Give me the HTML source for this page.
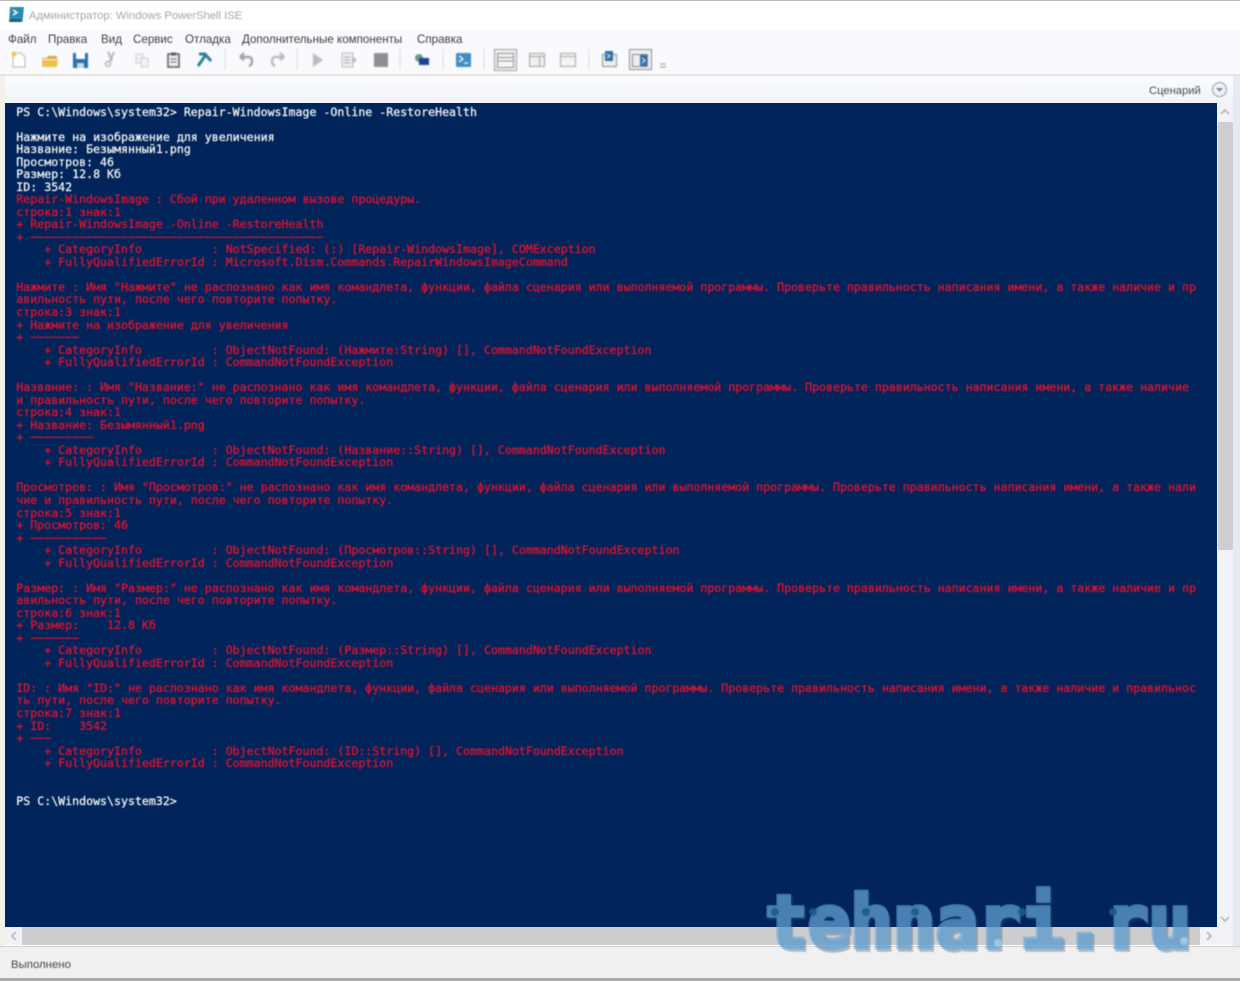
<!DOCTYPE html>
<html lang="ru"><head><meta charset="utf-8"><title>Windows PowerShell ISE</title>
<style>
html,body{margin:0;padding:0}
body{width:1240px;height:981px;overflow:hidden;background:#fff;position:relative;font-family:"Liberation Sans","Noto Sans CJK SC",sans-serif;}
.a{position:absolute}
.ui{color:#3c3f45;font-size:11.6px;filter:blur(.5px);white-space:nowrap}
#console{left:5px;top:103px;width:1212px;height:824px;background:#01255a;overflow:hidden}
pre{position:absolute;left:11.3px;top:2.5px;margin:0;font:11.6px/12.527px "DejaVu Sans Mono","Liberation Mono",monospace;color:#f4f4f4;filter:blur(.6px);white-space:pre;-webkit-text-stroke:.25px currentColor}
pre i{font-style:normal;color:#e8102e}
</style></head><body>
<div class="a" style="left:0;top:0;width:1240px;height:30px;background:#fff"></div>
<div class="a" style="left:0;top:30px;width:1240px;height:45px;background:#f9fafe"></div>
<div class="a" style="left:0;top:74px;width:1240px;height:2px;background:#e6e4dc"></div>
<div class="a" style="left:0;top:76px;width:1240px;height:27px;background:linear-gradient(#fbfcfe,#f0f3f9)"></div>
<div class="a" style="left:0;top:0;width:1240px;height:1px;background:#bbb"></div>

<svg class="a" style="left:8px;top:6px;filter:blur(.5px)" width="17" height="17" viewBox="0 0 17 17"><path d="M2 1H16L14.500 16H1z" fill="#2c8bb0"/><path d="M5 4l4 2.500-4 2.500" fill="none" stroke="#fff" stroke-width="1.400"/><path d="M2 13h11v3H1.500z" fill="#205c78"/></svg>
<div class="a ui" style="left:29px;top:10px;font-size:11.2px;color:#a3a6ab">Администратор: Windows PowerShell ISE</div>

<div class="a ui" style="left:8px;top:33px">Файл</div>
<div class="a ui" style="left:48px;top:33px">Правка</div>
<div class="a ui" style="left:101px;top:33px">Вид</div>
<div class="a ui" style="left:133px;top:33px">Сервис</div>
<div class="a ui" style="left:185px;top:33px">Отладка</div>
<div class="a ui" style="left:242px;top:33px">Дополнительные компоненты</div>
<div class="a ui" style="left:417px;top:33px">Справка</div>

<svg class="a" style="left:0;top:48px;filter:blur(.7px)" width="680" height="26" viewBox="0 0 680 26">
<path d="M13 5h8l4 4v10H13z" fill="#fff" stroke="#b5b2a5"/><circle cx="14" cy="6" r="2.500" fill="#f3c64a"/>
<path d="M42 10h5l1-2h9v3H42z" fill="#d9a63a"/><path d="M42 12h16l-1 7H42z" fill="#f0c04e"/>
<rect x="73" y="5" width="15" height="15" fill="#2a6fae"/><rect x="76" y="5" width="9" height="6" fill="#fff"/><rect x="77" y="15" width="7" height="5" fill="#cfd8e0"/>
<path d="M114 4l-4 9m-2-9l4 9" stroke="#b5b5b5" stroke-width="2" fill="none"/><circle cx="108" cy="16" r="2.500" fill="none" stroke="#b5b5b5" stroke-width="1.500"/>
<rect x="136" y="6" width="7" height="9" fill="#f2f2f2" stroke="#cfcfcf"/><rect x="141" y="10" width="7" height="9" fill="#f2f2f2" stroke="#cfcfcf"/>
<rect x="168" y="6" width="11" height="13" fill="#eee" stroke="#55585c" stroke-width="1.500"/><rect x="171" y="4.500" width="5" height="3" fill="#55585c"/><path d="M170.500 11h6m-6 3h6" stroke="#666"/>
<path d="M198 18l7-10m-6-2h6l6 7" stroke="#2d7f99" stroke-width="3" fill="none"/>
<path d="M225 1v21" stroke="#dcdcdc"/>
<path d="M240 9h9c4 0 4 8 0 9m-9-9l4-4m-4 4l4 3" stroke="#a5a5a5" stroke-width="2.500" fill="none"/>
<path d="M284 9h-9c-4 0-4 8 0 9m9-9l-4-4m4 4l-4 3" stroke="#bcbcbc" stroke-width="2.500" fill="none"/>
<path d="M297 1v21" stroke="#dcdcdc"/>
<path d="M313 5l10 7-10 7z" fill="#bcbcbc"/>
<rect x="342" y="5" width="11" height="14" fill="#eee" stroke="#bbb"/><path d="M344 9h6m-6 3h6m-6 3h6" stroke="#aaa"/><path d="M352 8l5 4-5 4z" fill="#bbb"/>
<rect x="374" y="5" width="14" height="14" rx="1" fill="#8f8f8f"/>
<path d="M400 1v21" stroke="#dcdcdc"/>
<circle cx="419" cy="10" r="4" fill="#6a9a8e"/><rect x="419" y="10" width="10" height="7" fill="#1f3f9a"/>
<path d="M443 1v21" stroke="#dcdcdc"/>
<rect x="456" y="5" width="15" height="14" rx="1" fill="#3f8fc6"/><path d="M459 8l4 3-4 3m5 1h4" stroke="#fff" stroke-width="1.300" fill="none"/>
<path d="M484 1v21" stroke="#dcdcdc"/>
<rect x="494.500" y="1.500" width="22" height="21" fill="#eef0f4" stroke="#9b9b9b"/>
<rect x="497.500" y="5.500" width="16" height="14" fill="#f5f5f5" stroke="#8d8d8d"/><path d="M498 9.500h15m-15 3.500h15" stroke="#8d8d8d"/>
<rect x="529.500" y="5.500" width="15" height="13" fill="#f0f0f0" stroke="#a1a1a1"/><path d="M530 8.500h14M539.500 9v9" stroke="#a1a1a1"/>
<rect x="560.500" y="5.500" width="15" height="13" fill="#f4f4f4" stroke="#a6a6a6"/><path d="M561 8.500h14" stroke="#a6a6a6"/>
<path d="M589 1v21" stroke="#dcdcdc"/>
<rect x="602.500" y="6.500" width="14" height="12" fill="#eee" stroke="#8f8f8f"/><rect x="605" y="3" width="8" height="10" fill="#2c6ea8"/><path d="M607 6l3 2-3 2" stroke="#fff" fill="none"/>
<rect x="629.500" y="1.500" width="22" height="20" fill="#eef0f4" stroke="#8a8a8a"/><rect x="632.500" y="6.500" width="15" height="12" fill="#eee" stroke="#888"/><rect x="640" y="7" width="7" height="11" fill="#2c6ea8"/><path d="M642 10l3 2.500-3 2.500" stroke="#fff" fill="none"/>
<path d="M660 16h6m-6 3h6" stroke="#999"/>
</svg>

<div class="a ui" style="left:1149px;top:85px;font-size:11.2px;color:#4a4e55">Сценарий</div>
<svg class="a" style="left:1211px;top:81px;filter:blur(.5px)" width="17" height="17" viewBox="0 0 17 17"><circle cx="8.500" cy="8.500" r="7" fill="#eef0f5" stroke="#a9aebb" stroke-width="1.300"/><path d="M5 7l3.500 4L12 7z" fill="#7f8ca6"/></svg>

<div id="console" class="a"><pre>PS C:\Windows\system32&gt; Repair-WindowsImage -Online -RestoreHealth

Нажмите на изображение для увеличения
Название: Безымянный1.png
Просмотров: 46
Размер: 12.8 Кб
ID: 3542
<i>Repair-WindowsImage : Сбой при удаленном вызове процедуры.
строка:1 знак:1
+ Repair-WindowsImage -Online -RestoreHealth
+ ~~~~~~~~~~~~~~~~~~~~~~~~~~~~~~~~~~~~~~~~~~
    + CategoryInfo          : NotSpecified: (:) [Repair-WindowsImage], COMException
    + FullyQualifiedErrorId : Microsoft.Dism.Commands.RepairWindowsImageCommand

Нажмите : Имя "Нажмите" не распознано как имя командлета, функции, файла сценария или выполняемой программы. Проверьте правильность написания имени, а также наличие и пр
авильность пути, после чего повторите попытку.
строка:3 знак:1
+ Нажмите на изображение для увеличения
+ ~~~~~~~
    + CategoryInfo          : ObjectNotFound: (Нажмите:String) [], CommandNotFoundException
    + FullyQualifiedErrorId : CommandNotFoundException

Название: : Имя "Название:" не распознано как имя командлета, функции, файла сценария или выполняемой программы. Проверьте правильность написания имени, а также наличие
и правильность пути, после чего повторите попытку.
строка:4 знак:1
+ Название: Безымянный1.png
+ ~~~~~~~~~
    + CategoryInfo          : ObjectNotFound: (Название::String) [], CommandNotFoundException
    + FullyQualifiedErrorId : CommandNotFoundException

Просмотров: : Имя "Просмотров:" не распознано как имя командлета, функции, файла сценария или выполняемой программы. Проверьте правильность написания имени, а также нали
чие и правильность пути, после чего повторите попытку.
строка:5 знак:1
+ Просмотров: 46
+ ~~~~~~~~~~~
    + CategoryInfo          : ObjectNotFound: (Просмотров::String) [], CommandNotFoundException
    + FullyQualifiedErrorId : CommandNotFoundException

Размер: : Имя "Размер:" не распознано как имя командлета, функции, файла сценария или выполняемой программы. Проверьте правильность написания имени, а также наличие и пр
авильность пути, после чего повторите попытку.
строка:6 знак:1
+ Размер:    12.8 Кб
+ ~~~~~~~
    + CategoryInfo          : ObjectNotFound: (Размер::String) [], CommandNotFoundException
    + FullyQualifiedErrorId : CommandNotFoundException

ID: : Имя "ID:" не распознано как имя командлета, функции, файла сценария или выполняемой программы. Проверьте правильность написания имени, а также наличие и правильнос
ть пути, после чего повторите попытку.
строка:7 знак:1
+ ID:    3542
+ ~~~
    + CategoryInfo          : ObjectNotFound: (ID::String) [], CommandNotFoundException
    + FullyQualifiedErrorId : CommandNotFoundException</i>


PS C:\Windows\system32&gt;</pre></div>

<!-- left edge -->
<div class="a" style="left:0;top:76px;width:5px;height:870px;background:#f3f1ea"></div>
<!-- vertical scrollbar -->
<div class="a" style="left:1217px;top:103px;width:16px;height:824px;background:#f1f3f8"></div>
<div class="a" style="left:1218px;top:122px;width:15px;height:428px;background:#cfcfd2"></div>
<div class="a" style="left:1219px;top:105px;width:12px;height:14px;filter:blur(.4px)"><svg width="12" height="14"><path d="M2 9l4-4 4 4" stroke="#aaa" stroke-width="1.400" fill="none"/></svg></div>
<div class="a" style="left:1219px;top:912px;filter:blur(.4px)"><svg width="12" height="14"><path d="M2 5l4 4 4-4" stroke="#aaa" stroke-width="1.400" fill="none"/></svg></div>
<div class="a" style="left:1233px;top:76px;width:7px;height:870px;background:#e6ebf2"></div>
<!-- horizontal scrollbar -->
<div class="a" style="left:5px;top:927px;width:1228px;height:18px;background:#f1f2f5"></div>
<div class="a" style="left:22px;top:927px;width:1178px;height:18px;background:#cdcdcf"></div>
<div class="a" style="left:8px;top:929px;filter:blur(.4px)"><svg width="12" height="14"><path d="M8 3L4 7l4 4" stroke="#aaa" stroke-width="1.400" fill="none"/></svg></div>
<div class="a" style="left:1203px;top:929px;filter:blur(.4px)"><svg width="12" height="14"><path d="M4 3l4 4-4 4" stroke="#aaa" stroke-width="1.400" fill="none"/></svg></div>
<!-- status bar -->
<div class="a" style="left:0;top:946px;width:1240px;height:1px;background:#d4d2cc"></div>
<div class="a" style="left:0;top:947px;width:1240px;height:31px;background:#f0f0f0"></div>
<div class="a" style="left:0;top:978px;width:1240px;height:3px;background:#a9a9a9"></div>
<div class="a ui" style="left:11px;top:959px;font-size:11.4px;color:#44474c">Выполнено</div>

<!-- watermark -->
<svg class="a" style="left:740px;top:860px;filter:blur(.6px)" width="500" height="110" viewBox="0 0 500 110">
<g font-family="'DejaVu Sans Mono',monospace" font-weight="bold" font-size="72" stroke-width="4.500" stroke-linejoin="miter">
<text x="27" y="89.500" textLength="426" lengthAdjust="spacingAndGlyphs" fill="#33506e" stroke="#33506e" opacity=".35">tehnari.ru</text>
<text x="25" y="87" textLength="426" lengthAdjust="spacingAndGlyphs" fill="#64a5dc" stroke="#64a5dc" opacity=".68">tehnari.ru</text>
</g>
<g fill="#1c5a8c" fill-opacity=".9">
<circle cx="35" cy="52" r="4"/><circle cx="73" cy="52" r="4"/><circle cx="126" cy="52" r="4"/><circle cx="175" cy="52" r="4"/><circle cx="282" cy="52" r="4"/><circle cx="373" cy="52" r="4"/>
</g>
<g fill="#a9d5ee" fill-opacity=".7"><circle cx="258" cy="83" r="4"/><circle cx="444" cy="81" r="4"/></g>
</svg>
</body></html>
